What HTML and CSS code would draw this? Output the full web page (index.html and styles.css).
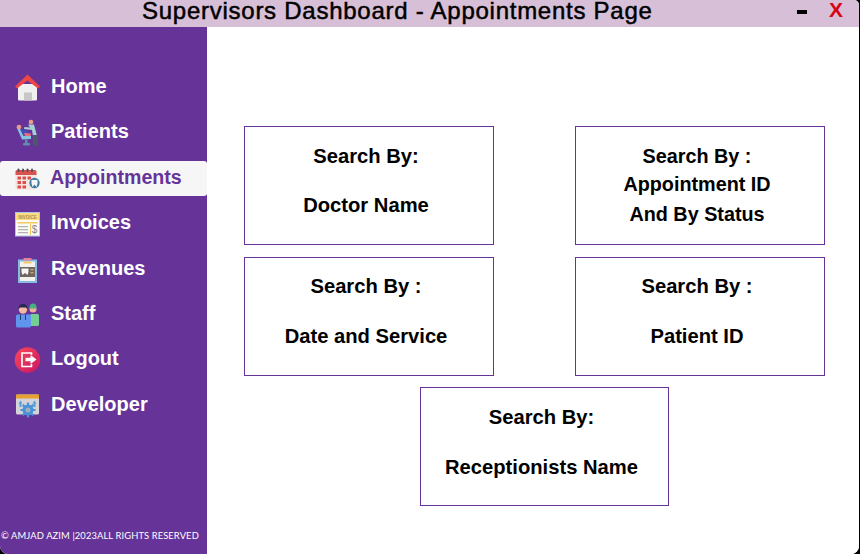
FILE: index.html
```html
<!DOCTYPE html>
<html lang="en">
<head>
<meta charset="utf-8">
<title>Supervisors Dashboard - Appointments Page</title>
<link rel="stylesheet" href="styles.css">
</head>
<body>
<div class="window">
  <header class="titlebar">
    <h1 class="title">Supervisors Dashboard - Appointments Page</h1>
    <span class="minimize"></span>
    <span class="close">X</span>
  </header>
  <div class="body">
    <aside class="sidebar">
      <nav class="nav">
        <a class="nav-item"><svg class="icon" viewBox="0 0 25 25"><rect x="3" y="10" width="19" height="16.500" rx="1" fill="#f1f0f0"/><rect x="9" y="18.500" width="8" height="8" fill="#c8c6c6"/><path d="M0 12.500 L12.500 0.500 L25 12.500 L23 14.500 L12.500 6.500 L2 14.500Z" fill="#ee4545"/></svg><span>Home</span></a>
        <a class="nav-item"><svg class="icon" viewBox="0 0 25 25"><path d="M1.500 8 L4 7 L8.500 17 L16 17 L16 20 L7 20.500Z" fill="#84c6dc"/><circle cx="4" cy="8" r="2.300" fill="#e89a84"/><path d="M5 10 L13 12 L14 15 L8 16Z" fill="#3f4fbf"/><path d="M9 14 L16 14.500 L15.500 17 L10 17Z" fill="#e8707c"/><rect x="10" y="20.500" width="2.500" height="4" fill="#5e8fa8"/><rect x="8" y="24" width="7" height="2.500" rx="1" fill="#5e8fa8"/><circle cx="16" cy="3" r="2.300" fill="#e8a088"/><path d="M13 5.500 H19 L22 17 H18 L17 11 L9 10 L9.500 8 L15 8.500Z" fill="#a4d2d2"/><path d="M18 16 H22.500 L23 27 H21 L20.500 20 L20 27 H18Z" fill="#4b5a6a"/></svg><span>Patients</span></a>
        <a class="nav-item active"><svg class="icon" viewBox="0 0 25 25"><rect x="0.500" y="5" width="21" height="19.500" rx="1.500" fill="#f7e6e0"/><path d="M0.500 10 V6.500 A1.500 1.500 0 0 1 2 5 H20 A1.500 1.500 0 0 1 21.500 6.500 V10Z" fill="#d9534f"/><g fill="#54505e"><rect x="2.500" y="3.500" width="2" height="3.500" rx="1"/><rect x="7" y="3.500" width="2" height="3.500" rx="1"/><rect x="11.500" y="3.500" width="2" height="3.500" rx="1"/><rect x="16" y="3.500" width="2" height="3.500" rx="1"/></g><g fill="#dc4f4f"><rect x="2.500" y="11.500" width="3.500" height="3"/><rect x="7.500" y="11.500" width="3.500" height="3"/><rect x="12.500" y="11.500" width="3.500" height="3"/><rect x="2.500" y="16" width="3.500" height="3"/><rect x="7.500" y="16" width="3.500" height="3"/><rect x="2.500" y="20.500" width="3.500" height="3"/><rect x="7.500" y="20.500" width="3.500" height="3"/></g><circle cx="19.500" cy="18" r="5.200" fill="#3f7ea6"/><path d="M16.500 15 H22.500 V18.500 L21.500 22 L19.500 19.500 L17.500 22 L16.500 18.500Z" fill="#f6f6f6"/></svg><span>Appointments</span></a>
        <a class="nav-item"><svg class="icon" viewBox="0 0 25 25"><rect x="0.500" y="2.500" width="24" height="23.500" fill="#fbfbf5" stroke="#b4c2ea"/><rect x="1" y="3" width="23" height="7" fill="#fadc84"/><text x="12.500" y="8.500" class="icon-label">INVOICE</text><rect x="2.500" y="12" width="20" height="1.500" fill="#f4c95c"/><g fill="#b4b4b4"><rect x="3" y="16" width="10" height="1.300"/><rect x="3" y="19" width="10" height="1.300"/><rect x="3" y="22" width="10" height="1.300"/></g><rect x="15" y="14" width="1" height="11" fill="#f4c95c"/><text x="19.500" y="23" class="icon-dollar">$</text></svg><span>Invoices</span></a>
        <a class="nav-item"><svg class="icon" viewBox="0 0 25 25"><rect x="3" y="3.500" width="19" height="23.500" fill="#84bce4"/><rect x="5" y="5.500" width="15" height="19.500" fill="#f4f2ea"/><rect x="8.500" y="2" width="8" height="2.500" fill="#e77fa0"/><rect x="8.500" y="5.500" width="8" height="2" fill="#f0cc70"/><rect x="5" y="11" width="15" height="10" fill="#6e6660"/><path d="M6.500 12.500 H13.500 V16 L12.500 19 L10 17 L7.500 19 L6.500 16Z" fill="#f6f6f6"/><g fill="#d8a860"><rect x="15.500" y="13" width="3" height="1.300"/><rect x="15.500" y="16" width="3" height="1.300"/></g></svg><span>Revenues</span></a>
        <a class="nav-item"><svg class="icon" viewBox="0 0 25 25"><rect x="15" y="13" width="9" height="12" rx="1.500" fill="#74cf95"/><circle cx="18" cy="8" r="3.500" fill="#edb097"/><path d="M14.500 6.500 A3.500 4 0 0 1 21.500 6.500 V7.500 H14.500Z" fill="#47b080"/><rect x="1" y="13.500" width="15" height="13" rx="1.500" fill="#5f95ec"/><circle cx="8" cy="8.500" r="4.200" fill="#f0b9a0"/><path d="M3.500 8.500 Q3.500 3 8 3 Q12.500 3 12.500 8.500 L11 6.500 H5Z" fill="#242a4e"/><path d="M5.500 13.500 V19 M10.500 13.500 V19" stroke="#24406e" fill="none"/></svg><span>Staff</span></a>
        <a class="nav-item"><svg class="icon" viewBox="0 0 25 25"><defs><linearGradient id="logout-fill" x1="0" y1="0" x2="1" y2="1"><stop offset="0" stop-color="#fb4a58"/><stop offset="1" stop-color="#c81464"/></linearGradient></defs><circle cx="12.500" cy="14" r="12.800" fill="url(#logout-fill)"/><path d="M16.500 9 V7 H7 V20.500 H16.500 V18" stroke="#fff" stroke-width="1.600" fill="none"/><path d="M10.500 11.800 H15.500 V9 L21.500 13.500 L15.500 18 V15.200 H10.500Z" fill="#fff"/></svg><span>Logout</span></a>
        <a class="nav-item"><svg class="icon" viewBox="0 0 25 25"><rect x="1" y="2.500" width="23" height="20" rx="1.500" fill="#d4d4d8"/><rect x="1" y="2.500" width="23" height="4" fill="#e8a030"/><path d="M3.500 11.500 L5.500 8.500 L7.500 11.500 H6.500 V15 H4.500 V11.500Z M17.500 11.500 L19.500 8.500 L21.500 11.500 H20.500 V15 H18.500 V11.500Z" fill="#5aa0d8"/><circle cx="13" cy="18" r="5.500" fill="#4a92d8"/><path d="M13 10.500 V25.500 M5.500 18 H20.500 M7.700 12.700 L18.300 23.300 M18.300 12.700 L7.700 23.300" stroke="#4a92d8" stroke-width="2.200"/><circle cx="13" cy="18" r="2.500" fill="#9ab0c0"/></svg><span>Developer</span></a>
      </nav>
      <footer class="copyright">© AMJAD AZIM |2023ALL RIGHTS RESERVED</footer>
    </aside>
    <main class="content">
      <section class="cards">
        <div class="card"><p>Search By:</p><p>Doctor Name</p></div>
        <div class="card card-tight"><p>Search By :</p><p>Appointment ID</p><p class="card-last">And By Status</p></div>
        <div class="card card-raised"><p>Search By :</p><p>Date and Service</p></div>
        <div class="card card-raised"><p>Search By :</p><p>Patient ID</p></div>
        <div class="card card-center"><p>Search By:</p><p>Receptionists Name</p></div>
      </section>
    </main>
  </div>
</div>
</body>
</html>
```
FILE: styles.css
```css
* { box-sizing: border-box; margin: 0; padding: 0; }
html, body { width: 860px; height: 554px; overflow: hidden; background: #000; }
body { font-family: "Liberation Sans", Arial, sans-serif; font-weight: 700; }
.window { width: 859px; height: 554px; display: flex; flex-direction: column; background: #fff; border-radius: 0 5px 8px 8px; overflow: hidden; }
.titlebar { height: 27px; background: #d8bfd8; display: flex; align-items: flex-start; flex: none; padding-left: 142px; color: #000; }
.title { font-size: 24px; line-height: 21px; font-weight: 400; -webkit-text-stroke: 0.5px #000; width: 655px; white-space: nowrap; letter-spacing: 0.74px; }
.minimize { width: 10px; height: 4px; margin-top: 10px; background: #000; flex: none; }
.close { color: #d90414; font-size: 21px; line-height: 20px; margin-left: 22px; font-weight: 700; }
.body { flex: 1; display: flex; min-height: 0; }
.sidebar { width: 207px; flex: none; background: #663399; display: flex; flex-direction: column; padding-top: 42px; }
.nav { display: flex; flex-direction: column; gap: 10.400px; }
.nav-item { height: 35px; display: flex; align-items: center; gap: 11px; padding-left: 15px; color: #fff; font-size: 20px; }
.nav-item.active { background: #f6f6f6; color: #663399; font-size: 19.600px; gap: 10px; border-radius: 3px; margin: 1.500px 0 -1.500px; padding-bottom: 3px; }
.icon { width: 25px; height: 25px; flex: none; overflow: visible; }
.icon-label { font-size: 4.500px; text-anchor: middle; fill: #b09048; font-family: "Liberation Sans", sans-serif; font-weight: 700; }
.icon-dollar { font-size: 10px; text-anchor: middle; fill: #888; font-family: "Liberation Sans", sans-serif; font-weight: 400; }
.copyright { margin-top: 108px; padding-left: 1px; font-family: "Lato", sans-serif; font-size: 9.400px; line-height: 12px; font-weight: 400; color: #fff; white-space: nowrap; letter-spacing: 0.1px; }
.content { flex: 1; padding: 99px 0 0 37px; background: #fff; }
.cards { display: grid; grid-template-columns: 250px 250px; column-gap: 81px; row-gap: 12px; grid-auto-rows: 119px; }
.card { border: 1px solid #663399; background: #fff; color: #000; font-size: 20.200px; line-height: 24px; text-align: center; display: flex; flex-direction: column; gap: 25px; padding: 17px 6px 0 0; }
.card-tight { font-size: 19.800px; gap: 4px; }
.card-last { margin-top: 2px; }
.card-raised { gap: 26px; padding-top: 16px; }
.card-center { grid-column: 1 / 3; width: 249px; height: 119px; gap: 26px; margin-top: -1px; margin-left: 176px; }
```
